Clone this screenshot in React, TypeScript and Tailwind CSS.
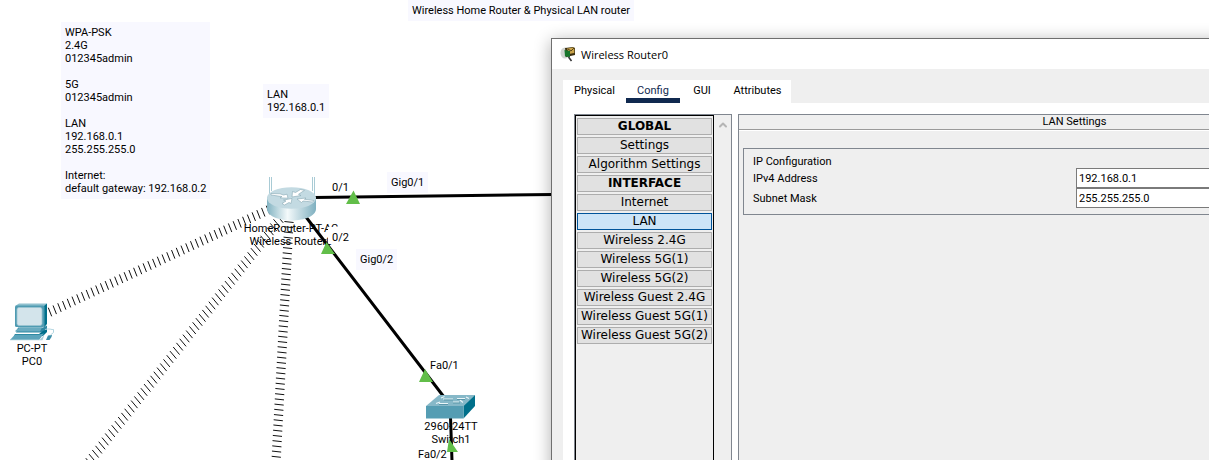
import { ChevronUp } from "lucide-react";

type Point = [number, number];

/** Wireless link: a run of short parallel strokes crossing the path. */
function Hatch({ from, to, half }: { from: Point; to: Point; half: Point }) {
  const length = Math.hypot(to[0] - from[0], to[1] - from[1]);
  const count = Math.round(length / 5.2);
  const strokes = Array.from({ length: count + 1 }, (_, i) => {
    const x = from[0] + ((to[0] - from[0]) * i) / count;
    const y = from[1] + ((to[1] - from[1]) * i) / count;
    return `M${x - half[0]} ${y - half[1]}L${x + half[0]} ${y + half[1]}`;
  });
  return <path d={strokes.join("")} stroke="#111" strokeWidth="1" />;
}

function RouterIcon() {
  return (
    <g>
      <path d="M269.5 177v18M271.5 177v14M312.5 177v14M314.500 177v18" stroke="#a9cbd5" strokeWidth="1" />
      <path d="M267 197v12c0 6.500 11 11.500 24.500 11.500S316 215.500 316 209v-12z" fill="url(#routerSide)" />
      <ellipse cx="291.500" cy="198" rx="24.500" ry="10.800" fill="#c3dae2" />
      <g fill="#fff" stroke="#86a8b4" strokeWidth="0.6">
        <path d="M271 193.500l9 .3 3.500 1.200 3.500-.8 1 4-8-.3 2-1.300-11-1.600z" />
        <path d="M292 197l.5-5.500 3 1 5-3 4 .8-6 4 2.500 1.200z" />
        <path d="M297 199l9-1-1.500 1.300 9.500 1.200-1.500 1.500-9.500-1-1.500 1.500z" />
        <path d="M282 203.500l4-2.500-2.500-1 8.500-1.500-1 5-2-1-4.500 2.500z" />
      </g>
    </g>
  );
}

function PcIcon() {
  return (
    <g>
      <path d="M15 306l4-2.500h28l-2 2.500z" fill="#8fc0ce" />
      <path d="M44 306l3-2.500V324l-3 3.500z" fill="#00708b" />
      <rect x="15" y="305.500" width="29.500" height="21.500" rx="1.500" fill="#4f9bb2" />
      <rect x="17" y="307.500" width="25" height="18" rx="2" fill="#d3e4eb" stroke="#9cc5d2" strokeWidth="0.8" />
      <path d="M18 327.500h25l4-2v3l-4 4H16z" fill="#2f87a2" />
      <path d="M16 330l4-2.500h22l-2 4H15z" fill="#69abc0" />
      <path d="M15 334h24l4-3 4-2v3l-4 4H14z" fill="#00708b" />
      <path d="M15 334.500h24l5-1-5 6.500H10z" fill="#5ca4bb" />
      <path d="M10 339.500h30l4.500-5-2 5.800H10z" fill="#a9d0dc" />
      <path d="M46 340l2-4.500 4-.5-.5 2-2 3z" fill="#3b8ea8" />
      <path d="M45 329.500c4-1.500 7 .5 8.500 0v3l-3 2.500" fill="none" stroke="#a9d0dc" strokeWidth="0.9" />
    </g>
  );
}

function SwitchIcon() {
  return (
    <g>
      <path d="M426 406l13-11h36l-11.500 11z" fill="#86b8c8" />
      <path d="M463.500 406L475 395v11l-11.500 12.500z" fill="#00708b" />
      <path d="M426 406h37.500v12.500H426z" fill="#559db3" />
      <path d="M441 398l3.500-1.500M443 399h10M457 398.500h8M466 397l3 1.500M436 403.500l4-1.500M439 403.500h9M453 402h6M460 400l3 2.500" stroke="#eaf5f8" strokeWidth="1.200" />
      <path d="M444 400h9M457 399.500h8M439 404.500h9M453 403h7" stroke="#3a7f95" strokeWidth="0.6" />
    </g>
  );
}

function Topology() {
  return (
    <svg className="absolute top-0 left-0 h-[460px] w-[560px]" viewBox="0 0 560 460" fill="none" aria-hidden="true">
      <defs>
        <linearGradient id="routerSide" x1="267" x2="316" y1="0" y2="0" gradientUnits="userSpaceOnUse">
          <stop offset="0" stopColor="#82b3c2" />
          <stop offset="0.42" stopColor="#f4fafb" />
          <stop offset="0.6" stopColor="#cfe2e8" />
          <stop offset="1" stopColor="#7fb0c0" />
        </linearGradient>
      </defs>
      <Hatch from={[50, 312]} to={[268, 210]} half={[1.7, 4.3]} />
      <Hatch from={[89, 462]} to={[280, 219]} half={[3.2, 3.8]} />
      <Hatch from={[289, 222]} to={[276, 462]} half={[4.6, 0.5]} />
      <path d="M314 197.500L553 194.500M306 217L444 397M450.500 417L452 461" stroke="#000" strokeWidth="3" />
      <RouterIcon />
      <PcIcon />
      <SwitchIcon />
      <path
        d="M353.500 190.500L360 204H346zM326.500 242L335 254H321zM425 369L433 382H419zM449 439L458 452H447z"
        fill="#62be49"
      />
    </svg>
  );
}

const NOTE = "absolute bg-[#f8f8ff] p-1 whitespace-pre";
const DEVICE = "absolute -translate-x-1/2 whitespace-pre text-center";

const MENU = [
  "GLOBAL",
  "Settings",
  "Algorithm Settings",
  "INTERFACE",
  "Internet",
  "LAN",
  "Wireless 2.4G",
  "Wireless 5G(1)",
  "Wireless 5G(2)",
  "Wireless Guest 2.4G",
  "Wireless Guest 5G(1)",
  "Wireless Guest 5G(2)",
];

function menuClass(item: string) {
  const base = "h-[17px] border font-['DejaVu_Sans',sans-serif] text-[12px] leading-[15px]";
  if (item === "LAN") return `${base} border-[#00549a] bg-[#cce4f7]`;
  if (item === "GLOBAL" || item === "INTERFACE") return `${base} border-[#adadad] bg-[#e1e1e1] font-bold`;
  return `${base} border-[#adadad] bg-[#e1e1e1]`;
}

function WindowIcon() {
  return (
    <svg className="h-4 w-4" viewBox="0 0 16 16" aria-hidden="true">
      <ellipse cx="5" cy="7" rx="4.500" ry="5.500" fill="#cfd3cf" />
      <path d="M5 2l8-1 2 1v7l-9 2z" fill="#3b3012" />
      <path d="M7 2.500l6.500-1 .8 1V7L9 8z" fill="#c9a34a" />
      <path d="M8 3l3 2 3-3" fill="none" stroke="#4a3a10" strokeWidth="0.9" />
      <path d="M4.500 4L10 5v6l-5-.5z" fill="#16752a" />
      <path d="M8.500 11l3 4" stroke="#333" strokeWidth="1.500" />
    </svg>
  );
}

function Tab({ label, active, className }: { label: string; active?: boolean; className: string }) {
  return (
    <button
      type="button"
      role="tab"
      aria-selected={!!active}
      className={`flex h-[23px] items-end justify-center border-b-[5px] text-[11px] leading-[14px] ${className} ${
        active ? "border-[#10294f] text-[#10294f]" : "border-transparent"
      }`}
    >
      {label}
    </button>
  );
}

function RouterWindow() {
  return (
    <section className="absolute top-[38px] -right-[214px] -bottom-5 left-[551px] flex flex-col border border-[#6f6f6f] bg-[#efefef] shadow-[0_3px_16px_rgba(0,0,0,0.32)]">
      <header className="flex h-[30px] shrink-0 items-center gap-1 bg-white pl-2">
        <WindowIcon />
        <h1 className="pl-px font-['Open_Sans',sans-serif] text-[11px]">Wireless Router0</h1>
      </header>
      <div className="flex flex-1 flex-col pt-[11px] pl-[11px]">
        <div role="tablist" className="flex self-start bg-white">
          <Tab label="Physical" className="w-[63px]" />
          <Tab label="Config" active className="w-[54px]" />
          <Tab label="GUI" className="w-[44px]" />
          <Tab label="Attributes" className="w-[67px]" />
        </div>
        <div className="flex flex-1 gap-[6px] bg-white px-[11px] pt-[11px]">
          <nav className="flex w-[158px] shrink-0 border border-[#80868f] bg-[#efefef]">
            <div className="flex flex-1 flex-col gap-[2px] border border-black px-px pt-[2px]">
              {MENU.map((item) => (
                <button key={item} type="button" className={menuClass(item)}>
                  {item}
                </button>
              ))}
            </div>
            <div className="flex w-[17px] justify-center pt-1">
              <ChevronUp size={12} strokeWidth={4} color="#b5b5b5" />
            </div>
          </nav>
          <main className="flex-1 border border-[#80868f] bg-[#efefef]">
            <h2 className="h-[15px] border-b border-[#9a9a9a] text-center leading-[14px] shadow-[0_1px_0_#fff]">
              LAN Settings
            </h2>
            <fieldset className="mx-1 mt-[18px] border border-[#80868f] px-[9px] py-[6px]">
              <div>IP Configuration</div>
              <div className="flex h-5 items-center">
                <label htmlFor="ipv4" className="w-[323px] shrink-0">
                  IPv4 Address
                </label>
                <input
                  id="ipv4"
                  defaultValue="192.168.0.1"
                  className="h-5 w-0 flex-1 border border-[#7a7a7a] bg-white px-[2px]"
                />
              </div>
              <div className="flex h-5 items-center">
                <label htmlFor="mask" className="w-[323px] shrink-0">
                  Subnet Mask
                </label>
                <input
                  id="mask"
                  defaultValue="255.255.255.0"
                  className="h-5 w-0 flex-1 border border-[#7a7a7a] bg-white px-[2px]"
                />
              </div>
            </fieldset>
          </main>
        </div>
      </div>
    </section>
  );
}

export default function App() {
  return (
    <div className="relative h-screen min-h-[460px] overflow-hidden bg-white font-['Roboto',sans-serif] text-[11px] leading-[13px] text-black">
      <div className={`${DEVICE} top-[222px] left-[291px]`}>{"HomeRouter-PT-AC\nWireless Router0"}</div>
      <div className={`${DEVICE} top-[342px] left-[32px]`}>{"PC-PT\nPC0"}</div>
      <div className={`${DEVICE} top-[420px] left-[451px]`}>{"2960-24TT\nSwitch1"}</div>
      <div className="absolute top-[227px] left-[328px] bg-white pt-1 pl-1">0/2</div>
      <Topology />
      <div className="absolute top-[181px] left-[332px]">0/1</div>
      <div className="absolute top-[359px] left-[430px]">Fa0/1</div>
      <div className="absolute top-[449px] left-[418px] leading-[11px]">Fa0/2</div>
      <div className={`${NOTE} top-0 left-[408px]`}>{"Wireless Home Router & Physical LAN router"}</div>
      <div className={`${NOTE} top-[22px] left-[61px]`}>
        {
          "WPA-PSK\n2.4G\n012345admin\n\n5G\n012345admin\n\nLAN\n192.168.0.1\n255.255.255.0\n\nInternet:\ndefault gateway: 192.168.0.2"
        }
      </div>
      <div className={`${NOTE} top-[84px] left-[263px]`}>{"LAN\n192.168.0.1"}</div>
      <div className={`${NOTE} top-[172px] left-[387px]`}>Gig0/1</div>
      <div className={`${NOTE} top-[249px] left-[356px]`}>Gig0/2</div>
      <RouterWindow />
    </div>
  );
}
